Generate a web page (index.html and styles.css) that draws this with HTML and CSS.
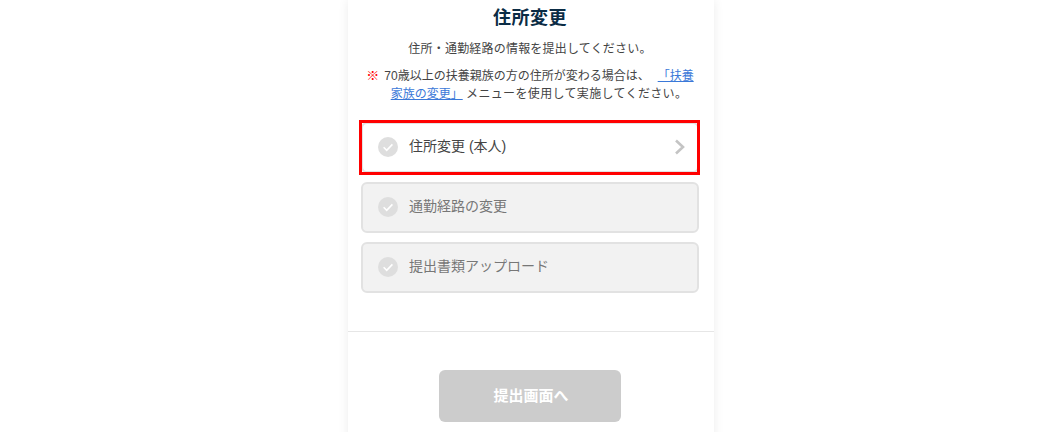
FILE: index.html
```html
<!DOCTYPE html>
<html lang="ja">
<head>
    <meta charset="UTF-8">
    <title>住所変更</title>
    <link rel="stylesheet" href="styles.css">
</head>
<body>
    <div class="card">
        <div class="top">
            <h1 class="title">住所変更</h1>
            <p class="lead">住所・通勤経路の情報を提出してください。</p>
            <p class="note"><span class="mark">※</span>70歳以上の扶養親族の方の住所が変わる場合は、<a class="link" href="#">「扶養家族の変更」</a> <span class="tail">メニューを使用して実施してください。</span></p>
            <div class="steps">
                <div class="step active">
                    <svg class="check" viewBox="0 0 20 20"><circle cx="10" cy="10" r="10" fill="#dedede"/><path d="M5.6 10.3l3.1 3 5.7-5.9" fill="none" stroke="#fff" stroke-width="1.6"/></svg>
                    <span class="label">住所変更 (本人)</span>
                    <svg class="chevron" viewBox="0 0 12 16"><path d="M2 1.5l7 6.5-7 6.5" fill="none" stroke="#c4c4c4" stroke-width="2.6"/></svg>
                    <div class="highlight"></div>
                </div>
                <div class="step">
                    <svg class="check" viewBox="0 0 20 20"><circle cx="10" cy="10" r="10" fill="#dedede"/><path d="M5.6 10.3l3.1 3 5.7-5.9" fill="none" stroke="#fff" stroke-width="1.6"/></svg>
                    <span class="label">通勤経路の変更</span>
                </div>
                <div class="step">
                    <svg class="check" viewBox="0 0 20 20"><circle cx="10" cy="10" r="10" fill="#dedede"/><path d="M5.6 10.3l3.1 3 5.7-5.9" fill="none" stroke="#fff" stroke-width="1.6"/></svg>
                    <span class="label">提出書類アップロード</span>
                </div>
            </div>
        </div>
        <div class="bottom">
            <button class="submit">提出画面へ</button>
        </div>
    </div>
</body>
</html>
```

FILE: styles.css
```css
html, body {
    margin: 0;
    height: 432px;
    overflow: hidden;
    background-color: #fff;
}
body {
    font-family: "Liberation Sans", "Noto Sans CJK JP", sans-serif;
    color: #444;
    font-size: 12px;
    padding-left: 348px;
}
.card {
    width: 366px;
    height: 500px;
    background-color: #fff;
    box-shadow: 0 0 10px rgba(0, 0, 0, 0.08);
}
.top {
    padding: 6px 15px 38px 13px;
    border-bottom: 1px solid #e6e6e6;
}
.title {
    margin: 0;
    font-size: 18px;
    line-height: 24px;
    font-weight: bold;
    letter-spacing: 0.5px;
    color: #0b2c45;
    text-align: center;
}
.lead {
    margin: 10px 0 0;
    line-height: 18px;
    letter-spacing: 0.2px;
    text-align: center;
}
.note {
    margin: 9px 0 0;
    padding: 0 5px;
    line-height: 18px;
    text-align: center;
    text-spacing-trim: space-all;
}
.mark {
    margin-right: 5px;
    color: #f00;
    font-size: 13px;
    font-weight: bold;
}
.link {
    margin-left: 8px;
    color: #3a78d8;
}
.tail {
    margin-right: -18px;
    letter-spacing: 0.35px;
}
.steps {
    display: flex;
    flex-direction: column;
    gap: 9px;
    margin-top: 19px;
}
.step {
    position: relative;
    display: flex;
    align-items: center;
    height: 51px;
    box-sizing: border-box;
    padding: 0 11px 0 15px;
    background-color: #f2f2f2;
    border: 2px solid #e2e2e2;
    border-radius: 6px;
    color: #777;
    font-size: 14px;
}
.step.active {
    background-color: #fff;
    color: #444;
}
.check {
    width: 20px;
    height: 20px;
    margin: 0 11px 2px 0;
}
.label {
    flex: 1;
    margin-bottom: 5px;
}
.chevron {
    width: 12px;
    height: 16px;
    margin-bottom: 2px;
}
.highlight {
    position: absolute;
    inset: -4px -3px -4px -4px;
    border: 3px solid #f00;
}
.bottom {
    display: flex;
    justify-content: center;
    padding: 38px 2px 0 0;
}
.submit {
    width: 182px;
    height: 52px;
    padding: 0 0 4px 2px;
    border: 0;
    border-radius: 6px;
    background-color: #ccc;
    color: #fff;
    font-family: inherit;
    font-size: 15px;
    font-weight: bold;
}
```
